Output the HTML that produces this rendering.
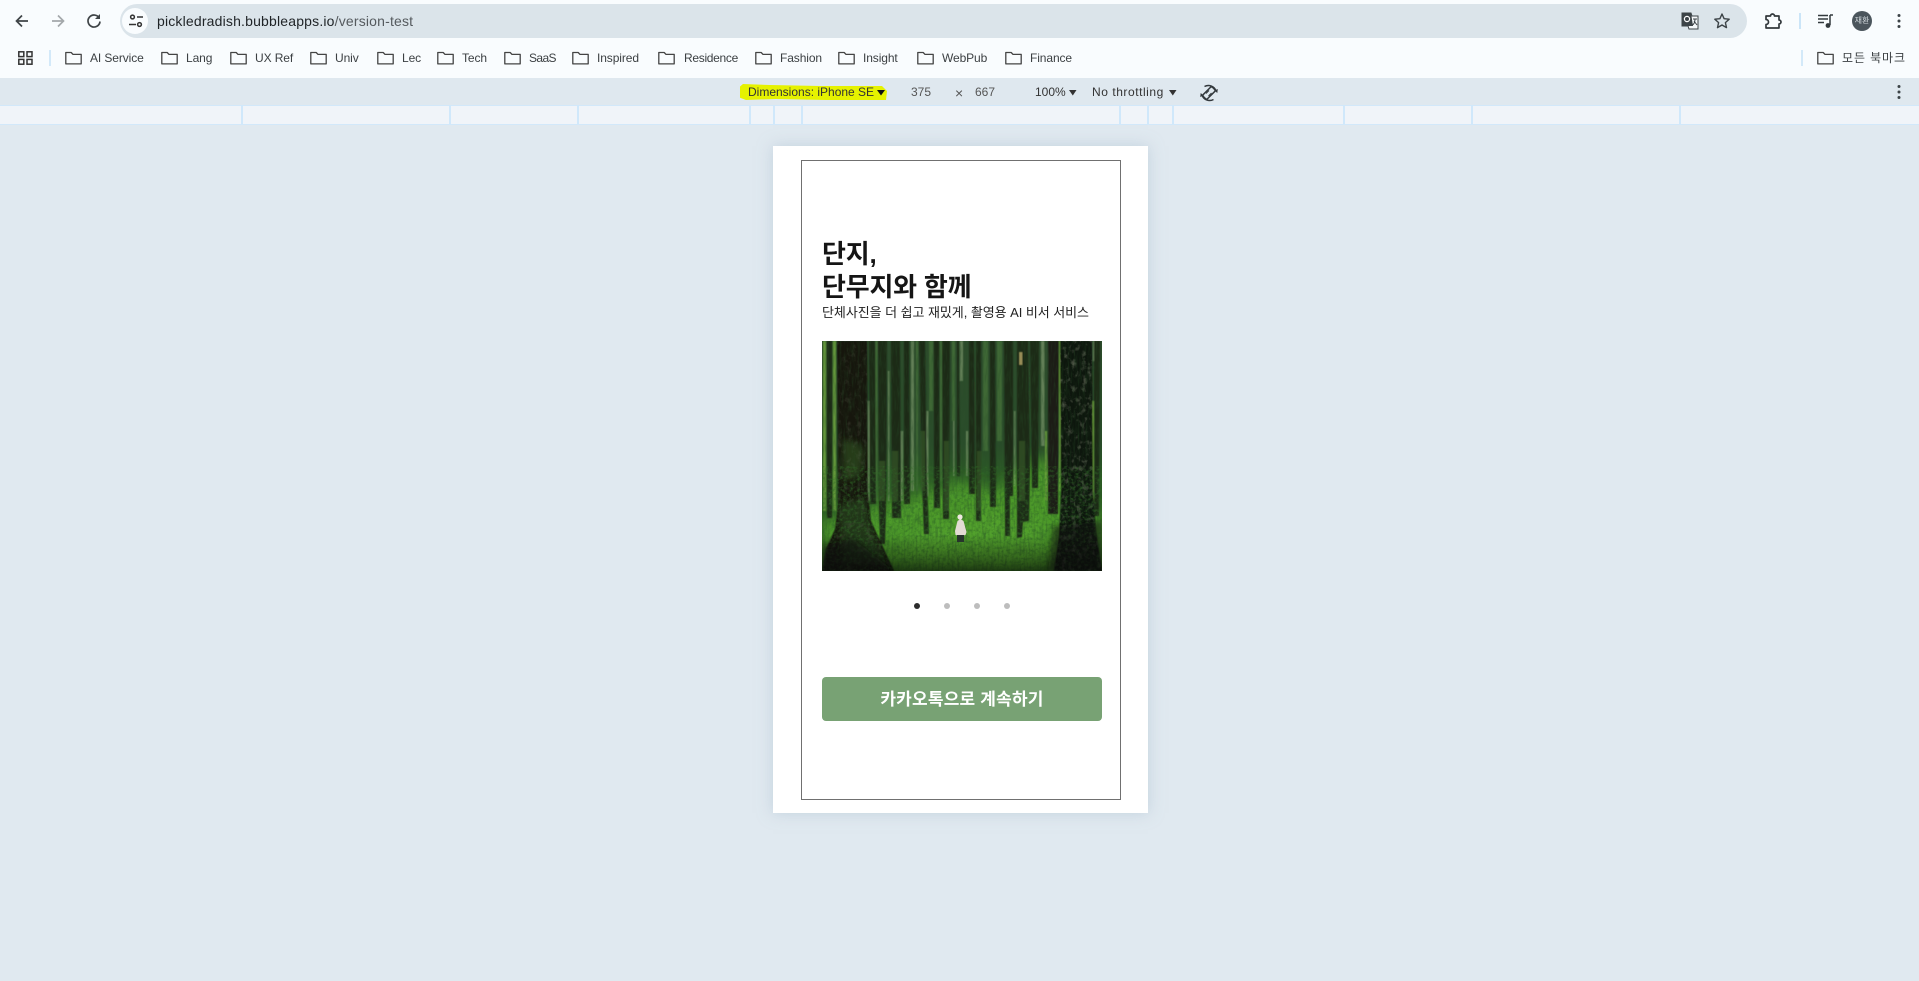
<!DOCTYPE html>
<html lang="ko"><head><meta charset="utf-8"><title>pickledradish</title>
<style>
html,body{margin:0;padding:0;width:1919px;height:981px;overflow:hidden;background:#e0e9f0;font-family:"Liberation Sans","Noto Sans CJK KR",sans-serif;color:#222}
.a{position:absolute}
.bm{position:absolute;top:51px;font-size:12px;line-height:15px;color:#3c4043;white-space:nowrap;letter-spacing:-.1px}
.fd{position:absolute;top:51px;width:17px;height:14px}
.dt{position:absolute;top:85px;font-size:12px;line-height:15px;color:#333;white-space:nowrap}
.tick{position:absolute;top:105px;height:19px;width:2px;background:#d0e8fb}
svg{display:block}
.ko{font-family:"Liberation Sans","Noto Sans CJK KR",sans-serif}
</style></head><body>
<svg width="0" height="0" style="position:absolute"><defs>
<symbol id="folder" viewBox="0 0 17 14"><path d="M.8 1.500h5.400l1.800 1.900h8.200v9.500H.8z" fill="none" stroke="#444" stroke-width="1.300" stroke-linejoin="round"/></symbol>
</defs></svg>

<!-- toolbar -->
<div class="a" style="left:0;top:0;width:1919px;height:78px;background:#f9fcfe"></div>
<div class="a" style="left:120px;top:4px;width:1627px;height:34px;border-radius:17px;background:#dbe4ea"></div>
<svg class="a" style="left:12px;top:11px" width="20" height="20" viewBox="0 0 20 20"><path d="M16 10H5M10 4.500L4.500 10l5.500 5.500" fill="none" stroke="#3f4447" stroke-width="1.700"/></svg>
<svg class="a" style="left:48px;top:11px" width="20" height="20" viewBox="0 0 20 20"><path d="M4 10h11M10 4.500l5.500 5.500L10 15.500" fill="none" stroke="#a4a8ab" stroke-width="1.700"/></svg>
<svg class="a" style="left:84px;top:11px" width="20" height="20" viewBox="0 0 20 20"><path d="M15.200 7A6 6 0 1 0 16 10.500" fill="none" stroke="#3f4447" stroke-width="1.700"/><path d="M16 3v5h-5z" fill="#3f4447"/></svg>
<div class="a" style="left:122px;top:8px;width:26px;height:26px;border-radius:13px;background:#f9fcfe"></div>
<svg class="a" style="left:128px;top:13px" width="16" height="16" viewBox="0 0 16 16"><g fill="none" stroke="#333" stroke-width="1.500"><circle cx="4.500" cy="4" r="1.900"/><path d="M9 4h6M1 11.500h7"/><circle cx="11.500" cy="11.500" r="1.900"/></g></svg>
<div class="a" style="left:157px;top:13px;font-size:14px;line-height:17px;white-space:nowrap;color:#1f2326;letter-spacing:.18px">pickledradish.bubbleapps.io<span style="color:#555a5e">/version-test</span></div>

<svg class="a" style="left:1681px;top:12px" width="18" height="18" viewBox="0 0 18 18"><path d="M1 1h9l1 3h6v13H8l-1-3H1z" fill="#f4f7f9" stroke="#3c4347" stroke-width="1"/><path d="M1 1h9l2 13H1z" fill="#3c4347"/><circle cx="6" cy="7" r="2.600" fill="none" stroke="#fff" stroke-width="1.200"/><path d="M12 7h4M14 7c0 3-1 5-2.500 6M13 9l3 4" stroke="#3c4347" fill="none"/></svg>
<svg class="a" style="left:1713px;top:12px" width="18" height="18" viewBox="0 0 18 18"><path d="M9 2l2.100 4.700 5.100.5-3.800 3.400 1.100 5L9 13l-4.500 2.600 1.100-5L1.800 7.200l5.100-.5z" fill="none" stroke="#3c4347" stroke-width="1.400" stroke-linejoin="round"/></svg>
<svg class="a" style="left:1764px;top:12px" width="19" height="18" viewBox="0 0 19 18"><path d="M2 4h4.500a2 2 0 0 1 4 0H15v4a2 2 0 0 1 0 4v4H2v-3.500a1.700 1.700 0 0 0 0-5z" fill="none" stroke="#33393d" stroke-width="1.700" stroke-linejoin="round"/></svg>
<div class="a" style="left:1799px;top:13px;width:2px;height:16px;background:#cbe5f8"></div>
<svg class="a" style="left:1817px;top:13px" width="17" height="16" viewBox="0 0 17 16"><path d="M1 2.500h10M1 6h10M1 9.500h6" stroke="#33393d" stroke-width="1.500"/><path d="M13 2v10" stroke="#33393d" stroke-width="1.500"/><path d="M13 2h3" stroke="#33393d" stroke-width="1.500"/><circle cx="11" cy="12.500" r="2.400" fill="#33393d"/></svg>
<div class="a" style="left:1852px;top:11px;width:20px;height:20px;border-radius:10px;background:#4b555c;color:#d5dce0;font-size:8px;line-height:20px;text-align:center">재환</div>
<svg class="a" style="left:1896px;top:13px" width="6" height="16" viewBox="0 0 6 16"><circle cx="3" cy="2.500" r="1.500" fill="#3c4347"/><circle cx="3" cy="8" r="1.500" fill="#3c4347"/><circle cx="3" cy="13.500" r="1.500" fill="#3c4347"/></svg>

<!-- bookmarks -->
<svg class="a" style="left:18px;top:51px" width="15" height="14" viewBox="0 0 15 14"><g fill="none" stroke="#333" stroke-width="1.500"><rect x=".8" y=".8" width="5" height="4.800"/><rect x="9" y=".8" width="5" height="4.800"/><rect x=".8" y="8.400" width="5" height="4.800"/><rect x="9" y="8.400" width="5" height="4.800"/></g></svg>
<div class="a" style="left:49px;top:50px;width:2px;height:16px;background:#d3e9f9"></div>
<svg class="fd" style="left:65px"><use href="#folder"/></svg><div class="bm" style="left:90px">AI Service</div>
<svg class="fd" style="left:161px"><use href="#folder"/></svg><div class="bm" style="left:186px">Lang</div>
<svg class="fd" style="left:230px"><use href="#folder"/></svg><div class="bm" style="left:255px">UX Ref</div>
<svg class="fd" style="left:310px"><use href="#folder"/></svg><div class="bm" style="left:335px">Univ</div>
<svg class="fd" style="left:377px"><use href="#folder"/></svg><div class="bm" style="left:402px">Lec</div>
<svg class="fd" style="left:437px"><use href="#folder"/></svg><div class="bm" style="left:462px">Tech</div>
<svg class="fd" style="left:504px"><use href="#folder"/></svg><div class="bm" style="left:529px;letter-spacing:-.6px">SaaS</div>
<svg class="fd" style="left:572px"><use href="#folder"/></svg><div class="bm" style="left:597px">Inspired</div>
<svg class="fd" style="left:658px"><use href="#folder"/></svg><div class="bm" style="left:684px;letter-spacing:-.3px">Residence</div>
<svg class="fd" style="left:755px"><use href="#folder"/></svg><div class="bm" style="left:780px">Fashion</div>
<svg class="fd" style="left:838px"><use href="#folder"/></svg><div class="bm" style="left:863px">Insight</div>
<svg class="fd" style="left:917px"><use href="#folder"/></svg><div class="bm" style="left:942px">WebPub</div>
<svg class="fd" style="left:1005px"><use href="#folder"/></svg><div class="bm" style="left:1030px">Finance</div>
<div class="a" style="left:1801px;top:50px;width:2px;height:16px;background:#d3e9f9"></div>
<svg class="fd" style="left:1817px"><use href="#folder"/></svg><div class="bm ko" style="left:1842px;letter-spacing:.9px">모든 북마크</div>

<!-- devtools bar -->
<div class="a" style="left:0;top:78px;width:1919px;height:27px;background:#dfe8ef"></div>
<svg class="a" style="left:740px;top:81px" width="150" height="22" viewBox="0 0 150 22"><path d="M3 3L30 4l50 1 62 0 5 5-1 9-60 0-50-1-30 1-8-3-1-8z" fill="#e6f200"/></svg>
<div class="dt" style="left:748px">Dimensions: iPhone SE</div>
<svg class="a" style="left:877px;top:90px" width="9" height="6"><path d="M0 0h8L4 5.500z" fill="#111"/></svg>
<div class="dt" style="left:911px;color:#555">375</div>
<div class="dt" style="left:955px;color:#555;top:86px;font-size:14px">×</div>
<div class="dt" style="left:975px;color:#555">667</div>
<div class="dt" style="left:1035px">100%</div>
<svg class="a" style="left:1069px;top:90px" width="8" height="6"><path d="M0 0h7.500L3.800 5.500z" fill="#333"/></svg>
<div class="dt" style="left:1092px;letter-spacing:.55px">No throttling</div>
<svg class="a" style="left:1169px;top:90px" width="8" height="6"><path d="M0 0h7.500L3.800 5.500z" fill="#333"/></svg>
<svg class="a" style="left:1199px;top:83px" width="20" height="20" viewBox="0 0 20 20"><g fill="none" stroke="#33393d" stroke-width="1.500"><rect x="7" y="3.500" width="6" height="13" rx="1.500" transform="rotate(45 10 10)"/><path d="M5.500 3.500A8 8 0 0 1 17 8M14.500 16.500A8 8 0 0 1 3 12"/><path d="M7 10.500l3-3M9.500 13l3-3" stroke-width="1"/></g><path d="M18.800 6l-.5 4-3-2.500zM1.200 14l.5-4 3 2.500z" fill="#33393d"/></svg>
<svg class="a" style="left:1896px;top:84px" width="6" height="16" viewBox="0 0 6 16"><circle cx="3" cy="2.500" r="1.500" fill="#3c4347"/><circle cx="3" cy="8" r="1.500" fill="#3c4347"/><circle cx="3" cy="13.500" r="1.500" fill="#3c4347"/></svg>

<!-- ruler -->
<div class="a" style="left:0;top:105px;width:1919px;height:20px;background:#f0f4f9;border-top:1px solid #d2e8fa;border-bottom:1px solid #d2e8fa;box-sizing:border-box"></div>
<div class="tick" style="left:241px"></div><div class="tick" style="left:449px"></div><div class="tick" style="left:577px"></div><div class="tick" style="left:749px"></div><div class="tick" style="left:773px"></div><div class="tick" style="left:801px"></div><div class="tick" style="left:1119px"></div><div class="tick" style="left:1147px"></div><div class="tick" style="left:1172px"></div><div class="tick" style="left:1343px"></div><div class="tick" style="left:1471px"></div><div class="tick" style="left:1679px"></div>

<!-- device -->
<div class="a" style="left:773px;top:146px;width:375px;height:667px;background:#fff;box-shadow:0 0 14px rgba(165,188,203,.5)"></div>
<div class="a" style="left:801px;top:160px;width:320px;height:640px;border:1px solid #707070;box-sizing:border-box"></div>
<div class="a ko" style="left:822px;top:238px;font-size:26px;line-height:33px;font-weight:700;color:#151515;white-space:nowrap;letter-spacing:-.2px">단지,<br>단무지와 함께</div>
<div class="a ko" style="left:822px;top:304px;font-size:13px;line-height:18px;color:#222;white-space:nowrap;letter-spacing:-.05px">단체사진을 더 쉽고 재밌게, 촬영용 AI 비서 서비스</div>

<!-- forest -->
<svg class="a" style="left:822px;top:341px" width="280" height="230" viewBox="0 0 280 230">
<defs>
<linearGradient id="sky" x1="0" y1="0" x2="0" y2="1"><stop offset="0" stop-color="#2d4c2c"/><stop offset=".45" stop-color="#2a4d2a"/><stop offset=".6" stop-color="#2c5c25"/><stop offset="1" stop-color="#2c5c1e"/></linearGradient>
<linearGradient id="bot" x1="0" y1="0" x2="0" y2="1"><stop offset=".84" stop-color="#000" stop-opacity="0"/><stop offset="1" stop-color="#000" stop-opacity=".55"/></linearGradient>
<filter id="n" x="0" y="0" width="100%" height="100%"><feTurbulence type="fractalNoise" baseFrequency=".5 .07" numOctaves="3" seed="4"/><feColorMatrix values="0 0 0 0 0.02 0 0 0 0 0.07 0 0 0 0 0.02 2 0 0 0 -0.850"/></filter>
<filter id="m" x="0" y="0" width="100%" height="100%"><feTurbulence type="fractalNoise" baseFrequency=".28 .35" numOctaves="3" seed="9"/><feColorMatrix values="0 0 0 0 0.03 0 0 0 0 0.14 0 0 0 0 0.02 2.800 0 0 0 -1.250"/></filter>
<filter id="b"><feGaussianBlur stdDeviation=".6"/></filter>
<filter id="bb" x="-10%" y="-30%" width="120%" height="160%"><feGaussianBlur stdDeviation="7"/></filter>
<filter id="b3" x="-30%" y="-30%" width="160%" height="160%"><feGaussianBlur stdDeviation="3"/></filter>
<clipPath id="L"><path d="M15 0h30l1 150 3 30 23 50H0l4-22 9-20 3-24z"/></clipPath>
<clipPath id="R"><path d="M238 0h32l1 150 3 40 6 40h-48l5-35 2-45z"/></clipPath>
<filter id="bark" x="0" y="0" width="100%" height="100%"><feTurbulence type="fractalNoise" baseFrequency=".2 .16" numOctaves="3" seed="13"/><feColorMatrix values="0 0 0 0 0.26 0 0 0 0 0.28 0 0 0 0 0.2 3 0 0 0 -1.550"/></filter>
</defs>
<rect width="280" height="230" fill="url(#sky)"/>
<!-- moss floor -->
<path d="M0 180L50 165 90 155 135 140 175 150 215 115 240 135 280 175V230H0z" fill="#4d9a2b" filter="url(#bb)"/>
<path d="M80 205L130 175 180 172 222 185 215 225H90z" fill="#57a62f" opacity=".65" filter="url(#bb)"/>
<g filter="url(#b)">
<!-- bright gaps (thin) -->
<g fill="#6ea33c" opacity=".85"><rect x="1" y="0" width="3" height="170"/><rect x="11" y="0" width="3" height="170"/><rect x="223" y="90" width="2" height="70"/><rect x="237" y="0" width="1.500" height="150"/><rect x="270.500" y="60" width="2" height="110"/></g>
<g fill="#8ea87a" opacity=".55"><rect x="46" y="60" width="1.500" height="100"/><rect x="66" y="30" width="1.500" height="130"/><rect x="89" y="0" width="3" height="150"/><rect x="79" y="90" width="2" height="70"/><rect x="104.500" y="70" width="2" height="85"/><rect x="131" y="80" width="1.500" height="55"/><rect x="138" y="0" width="3" height="40"/><rect x="144" y="90" width="2" height="45"/><rect x="192" y="70" width="1.500" height="75"/><rect x="219" y="0" width="3.500" height="105"/><rect x="213" y="60" width="2" height="40"/><rect x="271" y="0" width="1.500" height="20"/></g>
<g fill="#4c7a3c" opacity=".6"><rect x="53.500" y="0" width="2" height="160"/><rect x="94" y="0" width="2" height="150"/><rect x="118" y="0" width="2" height="140"/><rect x="130" y="0" width="3" height="80"/><rect x="161" y="0" width="5" height="110"/><rect x="175" y="0" width="5" height="100"/><rect x="107" y="0" width="4" height="70"/></g>
<!-- mid trunks -->
<g fill="#1c2a18"><rect x="5" y="0" width="5" height="177"/><path d="M47 0h6l1 163h-6z"/><path d="M56 0h9l-1 170-1 33h-5l-1-33z"/><path d="M69 0h9l1 177h-9z"/><path d="M82 0h5l1 163h-6z"/><path d="M97 0h6l2 140 2 53h-5l-2-50z"/><path d="M112 0h5l1 167h-6z"/><path d="M120 0h8l-1 178h-6z"/><path d="M135 0h2l1 135h-3z"/><path d="M147 0h5l1 153h-6z"/><path d="M154 0h5v180h-5z"/><path d="M168 0h5l1 166h-6z"/><path d="M182 0h5l1 195h-5z"/><path d="M187 0h4v155h-4z"/><path d="M195 0h11l2 130-1 50-6 1-1 15-5 1z"/><path d="M208 0h9l-1 147h-6z"/><path d="M226 0h11l-1 173h-10z" fill="#1e1d16"/><path d="M272 0h6l-1 175h-5z"/></g>
<!-- mossy overlays on mid trunks -->
<g fill="#38562a" opacity=".7"><rect x="57" y="120" width="6" height="40"/><rect x="70" y="110" width="6" height="50"/><rect x="122" y="100" width="5" height="70"/><rect x="155" y="110" width="4" height="60"/><rect x="197" y="100" width="6" height="60"/><rect x="99" y="90" width="4" height="60"/></g>
<!-- large trunks -->
<path d="M15 0h30l1 150 3 30 23 50H0l4-22 9-20 3-24z" fill="#13160d"/>
<path d="M238 0h32l1 150 3 40 6 40h-48l5-35 2-45z" fill="#11120c"/>
</g>
<g clip-path="url(#L)"><path d="M20 98l14 3 8 8-3 25-18 6z" fill="#2b421c" opacity=".85" filter="url(#b3)"/><path d="M16 165l26-8 6 30 18 36H22z" fill="#26401a" opacity=".75" filter="url(#b3)"/></g>
<rect width="280" height="230" filter="url(#bark)" clip-path="url(#R)" opacity=".5"/>
<rect width="280" height="230" filter="url(#bark)" clip-path="url(#L)" opacity=".18"/>
<rect width="280" height="230" filter="url(#n)" opacity=".45"/>
<rect y="125" width="280" height="105" filter="url(#m)" opacity=".6"/>
<rect width="280" height="230" fill="url(#bot)"/>
<path d="M226 230l5-45 49-5v50zM0 230v-25l30-8 42 33z" fill="#0a0d08" opacity=".55" filter="url(#b3)"/>
<!-- small highlight -->
<rect x="197" y="11" width="3.500" height="13" fill="#c0ad6c" opacity=".75" filter="url(#b)"/>
<!-- person -->
<path d="M133 190l2.500-10 3-2 3 2 3 11-1 3-5 1-5-1z" fill="#e3dbd4"/><circle cx="138" cy="176" r="2.600" fill="#eee8e0"/><rect x="135" y="194" width="7" height="7" fill="#27342c"/>
</svg>

<!-- dots -->
<div class="a" style="left:914px;top:603px;width:6px;height:6px;border-radius:3px;background:#2d2d2d"></div>
<div class="a" style="left:944px;top:603px;width:6px;height:6px;border-radius:3px;background:#bdbdbd"></div>
<div class="a" style="left:974px;top:603px;width:6px;height:6px;border-radius:3px;background:#bdbdbd"></div>
<div class="a" style="left:1004px;top:603px;width:6px;height:6px;border-radius:3px;background:#bdbdbd"></div>

<!-- button -->
<div class="a ko" style="left:822px;top:677px;width:280px;height:44px;border-radius:4px;background:#78a274;color:#fff;font-size:17px;font-weight:700;line-height:46px;text-align:center;white-space:nowrap;letter-spacing:.2px">카카오톡으로 계속하기</div>
</body></html>
